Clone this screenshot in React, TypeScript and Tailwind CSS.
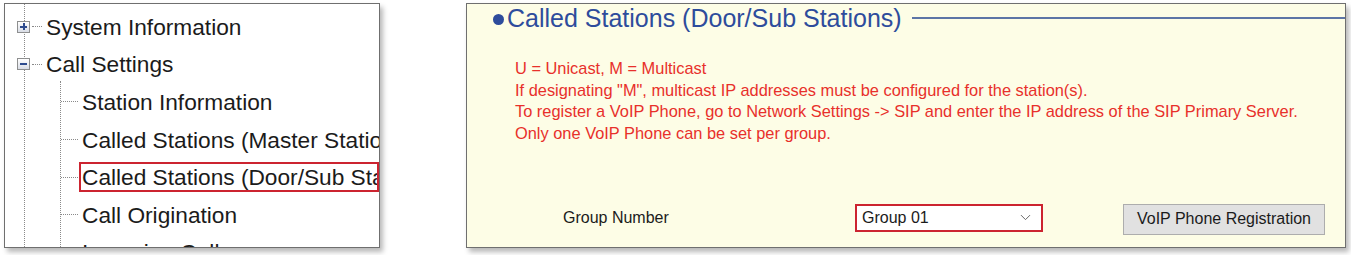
import { ChevronDown } from "lucide-react";

const font = { fontFamily: '"Liberation Sans", Arial, sans-serif' };

type TreeRow = { label: string; level: 1 | 2; expand?: "plus" | "minus"; selected?: boolean };

const rows: TreeRow[] = [
  { label: "System Information", level: 1, expand: "plus" },
  { label: "Call Settings", level: 1, expand: "minus" },
  { label: "Station Information", level: 2 },
  { label: "Called Stations (Master Stations)", level: 2 },
  { label: "Called Stations (Door/Sub Stations)", level: 2, selected: true },
  { label: "Call Origination", level: 2 },
  { label: "Incoming Calls", level: 2 },
];

function ExpandBox({ kind }: { kind: "plus" | "minus" }) {
  return (
    <span className="relative z-10 flex h-[12px] w-[13px] shrink-0 items-center justify-center border border-[#8e8f8f] bg-gradient-to-b from-white to-[#d9dde6]">
      <span className="absolute h-[2px] w-[7px] bg-[#2d4b8e]" />
      {kind === "plus" && <span className="absolute h-[7px] w-[2px] bg-[#2d4b8e]" />}
    </span>
  );
}

function TreePanel() {
  return (
    <div className="relative h-[245px] w-[376px] shrink-0 overflow-hidden border border-[#6f6f6f] bg-white shadow-[3px_4px_5px_rgba(0,0,0,0.28)]">
      {/* tree guide lines */}
      <div className="absolute bottom-0 left-[19px] top-0 border-l border-dotted border-[#8a8a8a]" />
      <div className="absolute bottom-0 left-[55px] top-[77px] border-l border-dotted border-[#8a8a8a]" />
      <div className="pt-[4px]">
        {rows.map((row) => (
          <div key={row.label} className="flex h-[37.6px] items-center whitespace-nowrap" style={font}>
            {row.level === 1 ? (
              <>
                <span className="ml-[12px] shrink-0">
                  <ExpandBox kind={row.expand ?? "plus"} />
                </span>
                <span className="ml-[2px] w-[10px] shrink-0 border-t border-dotted border-[#8a8a8a]" />
                <span className="ml-[4px] shrink-0 text-[22.7px] text-[#1b1b1b]">{row.label}</span>
              </>
            ) : (
              <>
                <span className="ml-[56px] w-[17px] shrink-0 border-t border-dotted border-[#8a8a8a]" />
                <span
                  className={
                    row.selected
                      ? "ml-[1px] flex h-[30px] min-w-0 flex-1 items-center overflow-hidden border-2 border-[#cc2430] pl-[1px] text-[22.7px] text-[#1b1b1b]"
                      : "ml-[4px] shrink-0 text-[22.7px] text-[#1b1b1b]"
                  }
                >
                  {row.label}
                </span>
              </>
            )}
          </div>
        ))}
      </div>
    </div>
  );
}

function SettingsPanel() {
  return (
    <div className="h-[245px] w-[880px] shrink-0 border border-[#6f6f6f] bg-[#fdfde6] shadow-[3px_4px_5px_rgba(0,0,0,0.28)]" style={font}>
      <div className="flex h-[29px] items-center pl-[26px]">
        <span className="mt-[2px] h-[11px] w-[11px] shrink-0 rounded-full bg-[#2e4c9c]" />
        <span className="ml-[3px] whitespace-nowrap text-[25px] leading-none text-[#2e4c9c]">
          Called Stations (Door/Sub Stations)
        </span>
        <span className="ml-[10px] mt-[-2px] h-[2px] flex-1 bg-[#5d75a6]" />
      </div>

      <div className="mt-[25px] pl-[48px] text-[16.4px] leading-[21.7px] text-[#e8302b]">
        <p>U = Unicast, M = Multicast</p>
        <p>If designating "M", multicast IP addresses must be configured for the station(s).</p>
        <p>To register a VoIP Phone, go to Network Settings -&gt; SIP and enter the IP address of the SIP Primary Server.</p>
        <p>Only one VoIP Phone can be set per group.</p>
      </div>

      <div className="mt-[59px] flex items-start">
        <div className="ml-[96px] flex h-[28px] w-[292px] items-center text-[16px] text-[#1b1b1b]">Group Number</div>
        <div className="flex h-[28px] w-[188px] items-center border-2 border-[#cc2430] bg-white pl-[5px] pr-[7px] text-[16px] text-[#1b1b1b]">
          <span className="flex-1">Group 01</span>
          <ChevronDown size={17} strokeWidth={1.3} className="text-[#5a5a5a]" />
        </div>
        <button className="ml-[80px] h-[31px] w-[202px] border border-[#adadad] bg-[#e1e1e1] text-[16px] text-[#1b1b1b]">
          VoIP Phone Registration
        </button>
      </div>
    </div>
  );
}

export default function App() {
  return (
    <div className="flex h-[255px] w-[1351px] gap-[86px] bg-white pl-[4px] pt-[3px]">
      <TreePanel />
      <SettingsPanel />
    </div>
  );
}
